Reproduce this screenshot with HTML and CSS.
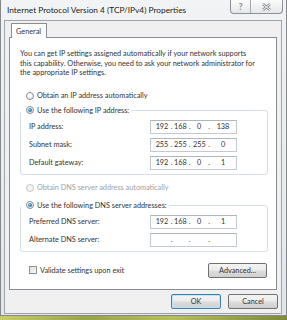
FILE: index.html
```html
<!DOCTYPE html>
<html>
<head>
  <meta charset="UTF-8">
  <title>Internet Protocol Version 4 (TCP/IPv4) Properties</title>
  <link rel="stylesheet" href="styles.css">
</head>
<body>
  <div class="window">
    <div class="titlebar">
      <span class="title">Internet Protocol Version 4 (TCP/IPv4) Properties</span>
      <div class="caption-btns">
        <span class="cap help">?</span>
        <span class="cap close">
          <svg width="9" height="8" viewBox="0 0 9 8">
            <path d="M1 1 L8 7 M8 1 L1 7" stroke="#8a8d91" stroke-width="2.6" fill="none"/>
            <path d="M1 1 L8 7 M8 1 L1 7" stroke="#fdfdfd" stroke-width="1" fill="none"/>
          </svg>
        </span>
      </div>
    </div>

    <div class="client">
      <div class="tabs">
        <span class="tab">General</span>
      </div>

      <div class="panel">
        <p class="intro">You can get IP settings assigned automatically if your network supports this capability. Otherwise, you need to ask your network administrator for the appropriate IP settings.</p>

        <label class="option">
          <input type="radio" name="ipMode" class="radio">
          Obtain an IP address automatically
        </label>

        <div class="group">
          <label class="option group-title">
            <input type="radio" name="ipMode" class="radio" checked>
            Use the following IP address:
          </label>
          <div class="field-row">
            <span>IP address:</span>
            <div class="ip-box"><span>192</span><i>.</i><span>168</span><i>.</i><span>0</span><i>.</i><span>138</span></div>
          </div>
          <div class="field-row">
            <span>Subnet mask:</span>
            <div class="ip-box"><span>255</span><i>.</i><span>255</span><i>.</i><span>255</span><i>.</i><span>0</span></div>
          </div>
          <div class="field-row">
            <span>Default gateway:</span>
            <div class="ip-box"><span>192</span><i>.</i><span>168</span><i>.</i><span>0</span><i>.</i><span>1</span></div>
          </div>
        </div>

        <label class="option disabled">
          <input type="radio" name="dnsMode" class="radio" disabled>
          Obtain DNS server address automatically
        </label>

        <div class="group dns">
          <label class="option group-title">
            <input type="radio" name="dnsMode" class="radio" checked>
            Use the following DNS server addresses:
          </label>
          <div class="field-row">
            <span>Preferred DNS server:</span>
            <div class="ip-box"><span>192</span><i>.</i><span>168</span><i>.</i><span>0</span><i>.</i><span>1</span></div>
          </div>
          <div class="field-row">
            <span>Alternate DNS server:</span>
            <div class="ip-box"><span></span><i>.</i><span></span><i>.</i><span></span><i>.</i><span></span></div>
          </div>
        </div>

        <div class="validate-row">
          <label class="check-label">
            <input type="checkbox" class="check">
            Validate settings upon exit
          </label>
          <button class="btn advanced">Advanced...</button>
        </div>
      </div>

      <div class="dialog-btns">
        <button class="btn default">OK</button>
        <button class="btn">Cancel</button>
      </div>
    </div>
  </div>
</body>
</html>
```

FILE: styles.css
```css
* {
  box-sizing: border-box;
  margin: 0;
  padding: 0;
}

body {
  width: 287px;
  height: 320px;
  overflow: hidden;
  font-family: Lato, 'Open Sans', sans-serif;
  font-size: 7.3px;
  color: #333;
  background: linear-gradient(90deg, #c9cd6a 0%, #9aa448 30%, #b7bf5c 60%, #7f8a3a 100%);
}

.window {
  height: 316px;
  border: 1px solid #85888c;
  border-top: none;
  padding: 0 4px 1px 3px;
  background: linear-gradient(180deg, #f1f3f5 0%, #e2e6ea 100%);
}

.titlebar {
  height: 20px;
  display: flex;
  justify-content: space-between;
  align-items: flex-start;
}

.title {
  align-self: center;
  margin-left: 3px;
  font-size: 8.3px;
  color: #1a1a1a;
  text-shadow: 0 0 4px #fff;
}

.caption-btns {
  display: flex;
  height: 14px;
  margin-right: -1px;
  border: 1px solid #8d9196;
  border-top: none;
  border-radius: 0 0 4px 4px;
  background: linear-gradient(180deg, #fbfcfc, #e4e7ea);
}

.cap {
  display: flex;
  align-items: center;
  justify-content: center;
}

.help {
  width: 20px;
  border-right: 1px solid #a4a8ac;
  font-size: 9px;
  font-weight: 700;
  color: #8a8d91;
}

.close {
  width: 31px;
}

.client {
  height: 294px;
  border: 1px solid #a0a4a8;
  background: #f0f0f0;
  padding: 2px 0 0 4px;
}

.tabs {
  display: flex;
  position: relative;
  z-index: 1;
  height: 15px;
  margin-bottom: -1px;
  padding-left: 2px;
}

.tab {
  width: 36px;
  height: 15px;
  border: 1px solid #898c95;
  border-bottom: none;
  background: #fff;
  padding-left: 4px;
  line-height: 15px;
}

.panel {
  width: 268px;
  border: 1px solid #898c95;
  background: #fff;
  padding: 11px 8px 11px 10px;
}

.intro {
  width: 236px;
  line-height: 9.6px;
}

.option {
  display: flex;
  align-items: center;
  height: 10px;
  margin-top: 13px;
  padding-left: 6px;
  gap: 3px;
  white-space: nowrap;
}

.option.disabled {
  margin-top: 8px;
  color: #a0a0a0;
}

.radio {
  appearance: none;
  width: 8px;
  height: 8px;
  border-radius: 50%;
  border: 1px solid #8a8e92;
  background: radial-gradient(circle at 40% 35%, #ffffff 20%, #dcdfe2 100%);
  position: relative;
}

.radio:checked::after {
  content: "";
  position: absolute;
  left: 1px;
  top: 1px;
  width: 4px;
  height: 4px;
  border-radius: 50%;
  background: radial-gradient(circle at 40% 35%, #7ccaf2 0%, #1d5f9a 80%);
}

.radio:disabled {
  border-color: #c6c8ca;
  background: #f4f4f4;
}

.group {
  margin-top: 9px;
  border: 1px solid #d5dfe5;
  border-radius: 3px;
  padding-bottom: 4px;
}

.group.dns {
  margin-top: 12px;
}

.group-title {
  width: fit-content;
  height: 11px;
  margin: -6px 0 0 0;
  padding: 0 2px 0 5px;
  background: #fff;
}

.field-row {
  display: grid;
  grid-template-columns: 121px 87px;
  align-items: center;
  height: 14px;
  margin-top: 4px;
  padding-left: 8px;
  white-space: nowrap;
}

.ip-box {
  display: grid;
  grid-template-columns: 14px 5px 12px 7px 12px 8px 20px;
  align-items: center;
  height: 14px;
  padding-left: 4px;
  border: 1px solid #c2c9d0;
  border-top-color: #aeb5bd;
  background: #fff;
}

.ip-box span,
.ip-box i {
  text-align: center;
  font-style: normal;
}

.validate-row {
  display: flex;
  justify-content: space-between;
  align-items: center;
  height: 15px;
  margin: 11px 1px 0 9px;
}

.check-label {
  display: flex;
  align-items: center;
  gap: 3px;
}

.check {
  appearance: none;
  width: 8px;
  height: 8px;
  border: 1px solid #8e9195;
  background: linear-gradient(135deg, #dcdee0, #f8f8f8);
}

.btn {
  height: 15px;
  border: 1px solid #707070;
  border-radius: 2px;
  background: linear-gradient(180deg, #f4f4f4 0%, #ebebeb 48%, #dddddd 52%, #cfcfcf 100%);
  font-family: Lato, 'Open Sans', sans-serif;
  font-size: 7.3px;
  color: #333;
}

.advanced {
  width: 59px;
}

.dialog-btns {
  display: flex;
  justify-content: flex-end;
  gap: 7px;
  margin: 4px 3px 0 0;
}

.dialog-btns .btn {
  width: 50px;
}

.btn.default {
  border-color: #3c7fb1;
  box-shadow: inset 0 0 0 1px #bfe6f8;
}
```
